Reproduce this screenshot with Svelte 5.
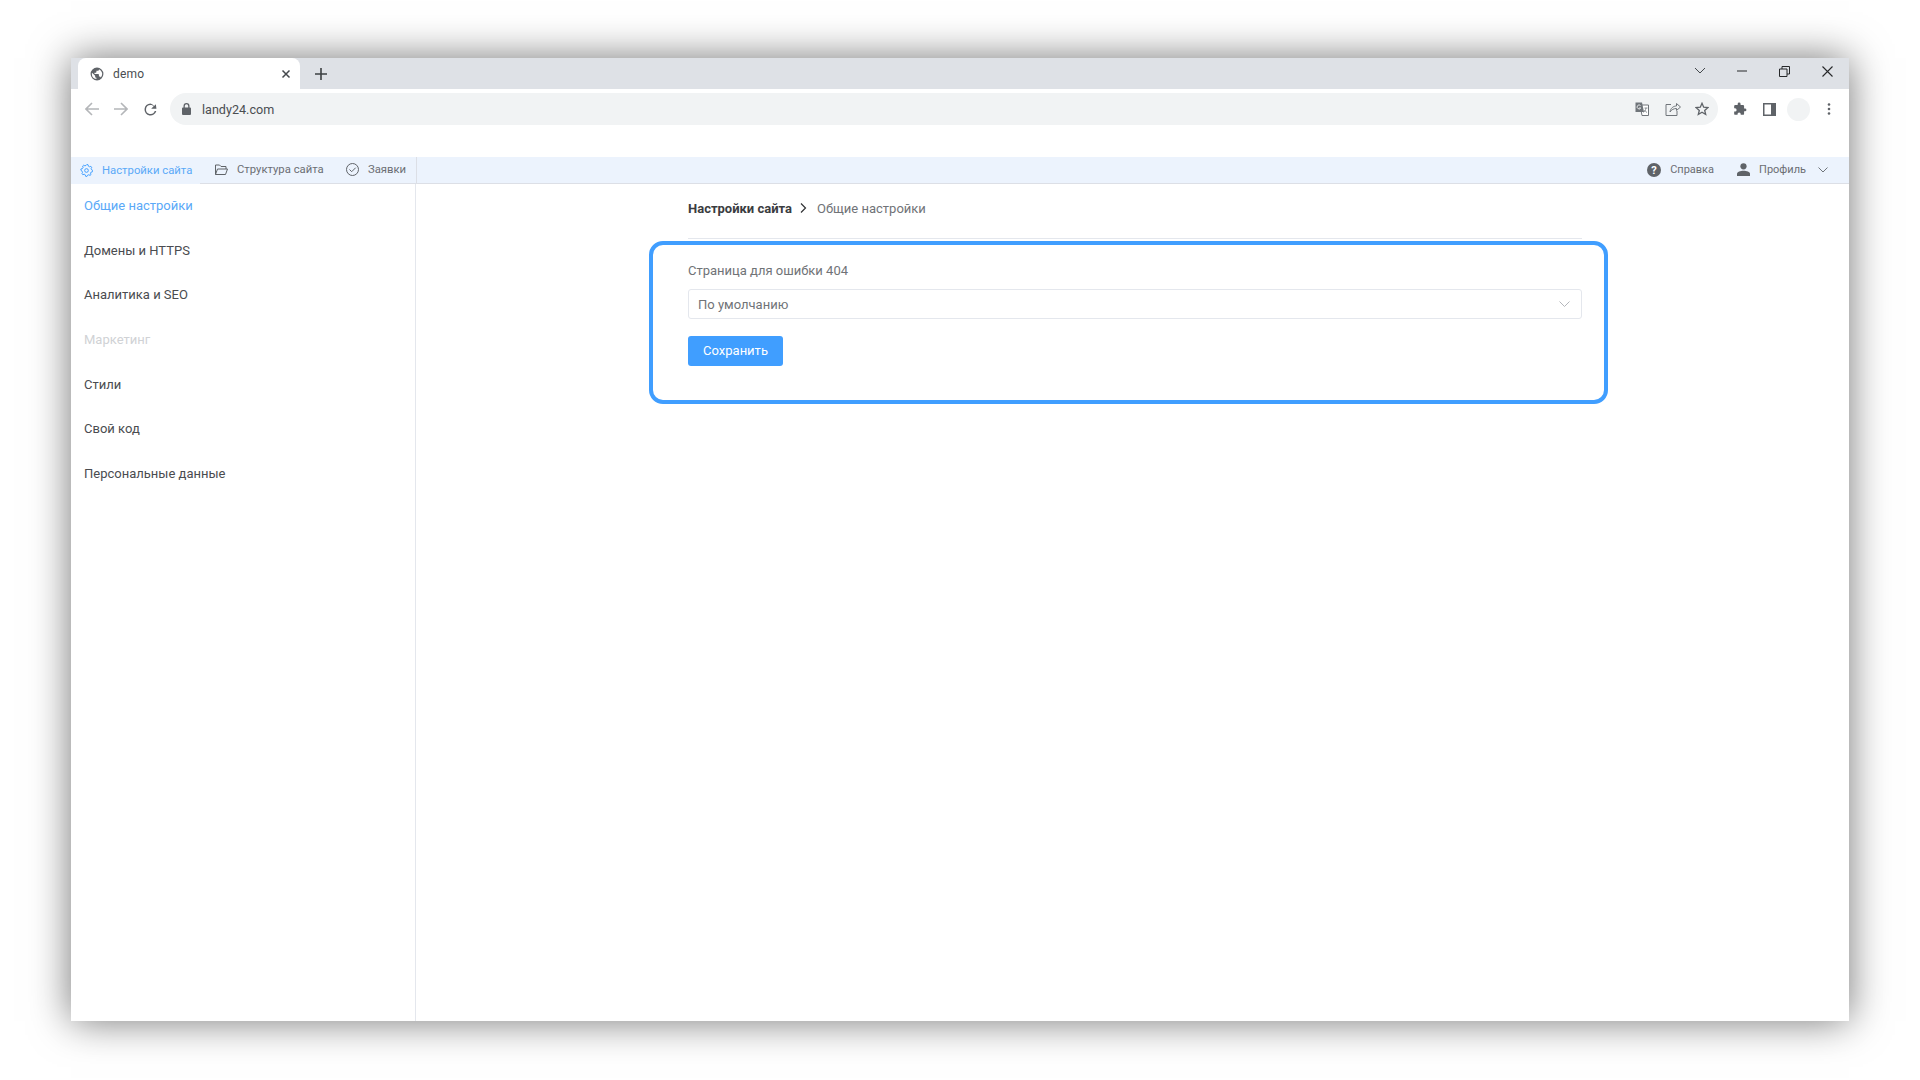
<script>
  const menu = [
    { label: "Общие настройки", state: "active" },
    { label: "Домены и HTTPS" },
    { label: "Аналитика и SEO" },
    { label: "Маркетинг", state: "disabled" },
    { label: "Стили" },
    { label: "Свой код" },
    { label: "Персональные данные" }
  ];
</script>

<div class="page">
  <div class="window">
    <div class="tabstrip">
      <div class="tab">
        <svg class="globe" width="14" height="14" viewBox="0 0 24 24"><path fill="#5f6368" d="M12 1a11 11 0 1 0 0 22 11 11 0 0 0 0-22zM3.200 12c0-.8.1-1.500.3-2.200L8.800 15v1.200c0 1.200 1 2.200 2.200 2.200v2.300A8.800 8.800 0 0 1 3.200 12zm15.300 5.900c-.3-.9-1.100-1.500-2.100-1.500h-1.100v-3.300c0-.6-.5-1.100-1.100-1.100H7.700V9.800h2.200c.6 0 1.100-.5 1.100-1.100V6.500h2.200c1.200 0 2.200-1 2.200-2.200v-.5a8.800 8.800 0 0 1 3.100 14.100z"/></svg>
        <span class="tab-title">demo</span>
        <svg class="tab-close" width="10" height="10" viewBox="0 0 10 10"><path d="M1.500 1.500l7 7m0-7l-7 7" stroke="#45494d" stroke-width="1.500" fill="none"/></svg>
      </div>
      <svg class="plus" width="14" height="14" viewBox="0 0 14 14"><path d="M7 1v12M1 7h12" stroke="#3c4043" stroke-width="1.600"/></svg>
      <div class="winctl">
        <svg class="ctl-tabs" width="12" height="8" viewBox="0 0 12 8"><path d="M1 1l5 5 5-5" stroke="#45494d" fill="none"/></svg>
        <svg class="ctl-min" width="10" height="2" viewBox="0 0 10 2"><path d="M0 1h10" stroke="#26282a"/></svg>
        <svg class="ctl-max" width="11" height="11" viewBox="0 0 11 11"><path d="M.5 3h7.500v7.500H.5zM3 3V.5h7.500V8H8" stroke="#26282a" fill="none"/></svg>
        <svg class="ctl-close" width="11" height="11" viewBox="0 0 11 11"><path d="M.5.500l10 10m0-10l-10 10" stroke="#26282a" stroke-width="1.100" fill="none"/></svg>
      </div>
    </div>

    <div class="toolbar">
      <svg class="nav-back" width="14" height="14" viewBox="0 0 14 14"><path d="M14 7H1.500M7 1L1 7l6 6" stroke="#b4b6b9" stroke-width="1.600" fill="none"/></svg>
      <svg class="nav-fwd" width="14" height="14" viewBox="0 0 14 14"><path d="M0 7h12.500M7 1l6 6-6 6" stroke="#b4b6b9" stroke-width="1.600" fill="none"/></svg>
      <svg class="nav-reload" width="15" height="15" viewBox="0 0 24 24"><path fill="#5f6368" d="M20.500 3.500l-2.800 2.800A9.600 9.600 0 0 0 12 2.400a9.600 9.600 0 1 0 9.300 12h-2.500a7.200 7.200 0 1 1-6.800-9.600c2 0 3.700.8 5 2.100l-3.900 3.900h8.400z"/></svg>
      <div class="omnibox">
        <svg width="9" height="12" viewBox="0 0 9 12"><path fill="#5f6368" d="M1.500 4.500V3a3 3 0 0 1 6 0v1.500H8a1 1 0 0 1 1 1V11a1 1 0 0 1-1 1H1a1 1 0 0 1-1-1V5.500a1 1 0 0 1 1-1zm1.300 0h3.400V3a1.700 1.700 0 0 0-3.400 0z"/></svg>
        <span class="url">landy24.com</span>
        <span class="spacer"></span>
        <svg class="om-translate" width="14" height="14" viewBox="0 0 14 14"><path d="M5 3h8.500v10.500H7z" fill="#fff" stroke="#70757a"/><path d="M.5.500H7L9 10H.5z" fill="#70757a"/><path d="M5.500 3.500a2 2 0 1 0 .3 2.500H4" stroke="#fff" fill="none" stroke-width=".8"/><path d="M9.500 6h3M11 6c-.3 2-1.300 3.500-2.500 4.500M9.500 8c.5 1 1.500 2 2.500 2.500" stroke="#70757a" fill="none" stroke-width=".8"/></svg>
        <svg class="om-share" width="16" height="14" viewBox="0 0 16 14"><path d="M6 2.500H1v11h11V9" stroke="#70757a" fill="none"/><path d="M5 10c.5-4 3.500-6 6.500-6V1.500L15.500 5l-4 3.500V6.500C9 6.500 6.500 7.500 5 10z" stroke="#70757a" fill="none"/></svg>
        <svg class="om-star" width="14" height="14" viewBox="0 0 14 14"><path d="M7 1.300l1.700 3.900 4.200.4-3.200 2.800 1 4.100L7 10.300l-3.700 2.200 1-4.100L1.100 5.600l4.200-.4z" stroke="#5f6368" stroke-width="1.300" fill="none"/></svg>
      </div>
      <svg class="tb-puzzle" width="14" height="14" viewBox="0 0 24 24"><path fill="#5f6368" d="M20.500 11H19V7a2 2 0 0 0-2-2h-4V3.500a2.500 2.500 0 0 0-5 0V5H4a2 2 0 0 0-2 2v3.800h1.500a2.700 2.700 0 0 1 0 5.400H2V20a2 2 0 0 0 2 2h3.800v-1.500a2.700 2.700 0 0 1 5.400 0V22H17a2 2 0 0 0 2-2v-4h1.500a2.500 2.500 0 0 0 0-5z"/></svg>
      <svg class="tb-panel" width="13" height="13" viewBox="0 0 13 13"><path fill="#5f6368" d="M0 0h13v13H0z"/><path fill="#fff" d="M1.500 1.500h6.500v10H1.500z"/></svg>
      <span class="avatar"></span>
      <svg class="tb-dots" width="4" height="12" viewBox="0 0 4 12"><circle cx="2" cy="1.500" r="1.300" fill="#5f6368"/><circle cx="2" cy="6" r="1.300" fill="#5f6368"/><circle cx="2" cy="10.500" r="1.300" fill="#5f6368"/></svg>
    </div>

    <div class="topgap"></div>

    <div class="appnav">
      <div class="appnav-left">
        <a class="navitem current">
          <svg width="13" height="13" viewBox="0 0 24 24" fill="none" stroke="#409eff" stroke-width="1.800"><circle cx="12" cy="12" r="3.400"/><path d="M12 1.500l2.200.4.7 2.700 1.900 1.100 2.700-.8 1.500 1.700-1.100 2.500.8 2.100 2.400 1.300-.4 2.300-2.700.7-1.100 1.900.8 2.700-1.700 1.500-2.500-1.100-2.100.8-1.300 2.400-2.300-.4-.7-2.700-1.900-1.100-2.700.8-1.500-1.700 1.100-2.500-.8-2.100L.9 12l.4-2.300L4 9l1.100-1.900-.8-2.700L6 2.900l2.500 1.100 2.100-.8z" transform="translate(.6 -.6)"/></svg>
          <span>Настройки сайта</span>
        </a>
        <a class="navitem folder">
          <svg width="13" height="12" viewBox="0 0 13 12" fill="none" stroke="#5f6368"><path d="M.5 10.500V1h4l1.500 1.500h5V5"/><path d="M.5 10.500h10L12.500 5H2.500z"/></svg>
          <span>Структура сайта</span>
        </a>
        <a class="navitem orders">
          <svg width="13" height="13" viewBox="0 0 13 13" fill="none" stroke="#5f6368"><circle cx="6.500" cy="6.500" r="6"/><path d="M3.500 6.500l2.200 2.200 4-4"/></svg>
          <span>Заявки</span>
        </a>
      </div>
      <div class="appnav-right">
        <a class="navitem help">
          <svg width="14" height="14" viewBox="0 0 14 14"><circle cx="7" cy="7" r="7" fill="#5f6368"/><text x="7" y="10.800" class="qmark" text-anchor="middle">?</text></svg>
          <span>Справка</span>
        </a>
        <a class="navitem profile">
          <svg width="13" height="13" viewBox="0 0 13 13"><circle cx="6.500" cy="3.300" r="3.100" fill="#5f6368"/><path fill="#5f6368" d="M0 13v-2.300c0-2 3.500-3 6.500-3s6.500 1 6.500 3V13z"/></svg>
          <span>Профиль</span>
          <svg class="caret" width="10" height="6" viewBox="0 0 10 6"><path d="M.5.500L5 5 9.500.500" stroke="#70757a" fill="none"/></svg>
        </a>
      </div>
    </div>

    <div class="body">
      <aside class="sidebar">
        {#each menu as item}
          <div class="menu-item {item.state ?? ''}">{item.label}</div>
        {/each}
      </aside>
      <main class="content">
        <div class="crumbs">
          <b>Настройки сайта</b>
          <svg width="7" height="10" viewBox="0 0 7 10"><path d="M1 .5L5.500 5 1 9.500" stroke="#303133" stroke-width="1.200" fill="none"/></svg>
          <span>Общие настройки</span>
        </div>
        <div class="form">
          <div class="highlight"></div>
          <label class="field-label" for="page404">Страница для ошибки 404</label>
          <div class="select" id="page404">
            <span>По умолчанию</span>
            <svg width="11" height="6" viewBox="0 0 11 6"><path d="M.5.500l5 5 5-5" stroke="#b4b6bb" fill="none"/></svg>
          </div>
          <button class="save">Сохранить</button>
        </div>
      </main>
    </div>
  </div>
</div>

<style>
  :global(body) {
    background: #fff;
    font-family: Roboto, "Liberation Sans", sans-serif;
  }
  .page {
    height: 1080px;
    padding: 58px 71px 59px;
    box-sizing: border-box;
    overflow: hidden;
  }
  .window {
    height: 963px;
    background: #fff;
    display: flex;
    flex-direction: column;
    box-shadow: 0 0 38px rgba(0, 0, 0, 0.55);
  }

  .tabstrip {
    height: 31px;
    flex: none;
    background: #dee1e6;
    display: flex;
    align-items: center;
    padding-left: 7px;
  }
  .tab {
    width: 222px;
    height: 31px;
    background: #fff;
    border-radius: 8px 8px 0 0;
    display: flex;
    align-items: center;
    padding: 0 12px 0 12px;
    box-sizing: border-box;
  }
  .globe {
    margin-right: 9px;
  }
  .tab-title {
    font-size: 12px;
    color: #4a4d51;
    letter-spacing: 0.2px;
  }
  .tab-close {
    margin-left: auto;
    margin-right: -3px;
  }
  .plus {
    margin-left: 14px;
  }
  .winctl {
    margin-left: auto;
    display: flex;
    align-items: center;
    height: 100%;
    padding-bottom: 5px;
    box-sizing: border-box;
  }
  .ctl-tabs {
    margin-right: 31px;
  }
  .ctl-min {
    margin-right: 32px;
  }
  .ctl-max {
    margin-right: 32px;
  }
  .ctl-close {
    margin-right: 16px;
  }

  .toolbar {
    height: 40px;
    flex: none;
    display: flex;
    align-items: center;
    padding-left: 14px;
  }
  .nav-fwd {
    margin-left: 15px;
  }
  .nav-reload {
    margin-left: 15px;
  }
  .omnibox {
    width: 1548px;
    height: 32px;
    margin-left: 12px;
    background: #f1f3f4;
    border-radius: 16px;
    display: flex;
    align-items: center;
    padding-left: 12px;
    box-sizing: border-box;
  }
  .url {
    margin-left: 11px;
    font-size: 12.6px;
    color: #4a4d51;
  }
  .spacer {
    flex: 1;
  }
  .om-share {
    margin-left: 16px;
  }
  .om-star {
    margin-left: 14px;
    margin-right: 9px;
  }
  .tb-puzzle {
    margin-left: 15px;
  }
  .tb-panel {
    margin-left: 16px;
  }
  .avatar {
    width: 23px;
    height: 23px;
    border-radius: 50%;
    background: #f1f3f4;
    margin-left: 11px;
  }
  .tb-dots {
    margin-left: 17px;
  }

  .topgap {
    height: 28px;
    flex: none;
  }

  .appnav {
    height: 27px;
    flex: none;
    background: #ecf3fd;
    display: flex;
    justify-content: space-between;
    font-size: 11.3px;
    color: #6b6e73;
    box-sizing: border-box;
  }
  .appnav-left {
    width: 346px;
    display: flex;
    border-right: 1px solid #dcdfe6;
    box-sizing: border-box;
  }
  .appnav-right {
    flex: 1;
    display: flex;
    justify-content: flex-end;
    border-bottom: 1px solid #dcdfe6;
    font-size: 11px;
  }
  .navitem {
    display: flex;
    align-items: center;
    gap: 9px;
    padding-bottom: 1px;
    box-sizing: border-box;
    border-bottom: 1px solid #dcdfe6;
  }
  .navitem.current {
    padding-left: 9px;
    width: 129px;
    color: #5aa9f8;
    border-bottom: none;
  }
  .folder {
    padding-left: 15px;
    width: 131px;
  }
  .orders {
    padding-left: 15px;
    flex: 1;
  }
  .appnav-right .navitem {
    border-bottom: none;
  }
  .help {
    margin-right: 23px;
  }
  .profile {
    margin-right: 21px;
  }
  .caret {
    margin-left: 3px;
  }
  .qmark {
    font-size: 11px;
    font-weight: 700;
    fill: #fff;
  }

  .body {
    flex: 1;
    display: flex;
    min-height: 0;
  }
  .sidebar {
    width: 345px;
    flex: none;
    border-right: 1px solid #e4e7ed;
    box-sizing: border-box;
    padding: 0 13px;
  }
  .menu-item {
    height: 44.7px;
    line-height: 44.700px;
    font-size: 13px;
    color: #4a4c50;
  }
  .menu-item.active {
    color: #5aa9f8;
  }
  .menu-item.disabled {
    color: #d0d2d5;
  }

  .content {
    width: 894px;
    margin-left: 272px;
  }
  .crumbs {
    height: 55px;
    padding-bottom: 6px;
    display: flex;
    align-items: center;
    gap: 8px;
    font-size: 13px;
    color: #707377;
    border-bottom: 1px solid #e4e7ed;
    box-sizing: border-box;
  }
  .crumbs b {
    color: #3a3c40;
    font-weight: 700;
  }
  .crumbs span {
    margin-left: 2px;
  }
  .form {
    position: relative;
    padding-top: 23px;
  }
  .highlight {
    position: absolute;
    left: -39px;
    right: -26px;
    top: 2px;
    height: 163px;
    border: 4px solid #409eff;
    border-radius: 14px;
    box-sizing: border-box;
  }
  .field-label {
    display: block;
    height: 17px;
    line-height: 17px;
    font-size: 13px;
    color: #707377;
  }
  .select {
    margin-top: 10px;
    height: 30px;
    border: 1px solid #e4e7ed;
    border-radius: 3px;
    display: flex;
    align-items: center;
    justify-content: space-between;
    padding: 0 11px 0 9px;
    box-sizing: border-box;
    font-size: 13px;
    color: #707377;
  }
  .save {
    display: block;
    margin-top: 17px;
    width: 95px;
    height: 30px;
    border: none;
    border-radius: 3px;
    background: #409eff;
    color: #fff;
    font-family: inherit;
    font-size: 13px;
    padding: 0 0 2px;
  }
</style>
